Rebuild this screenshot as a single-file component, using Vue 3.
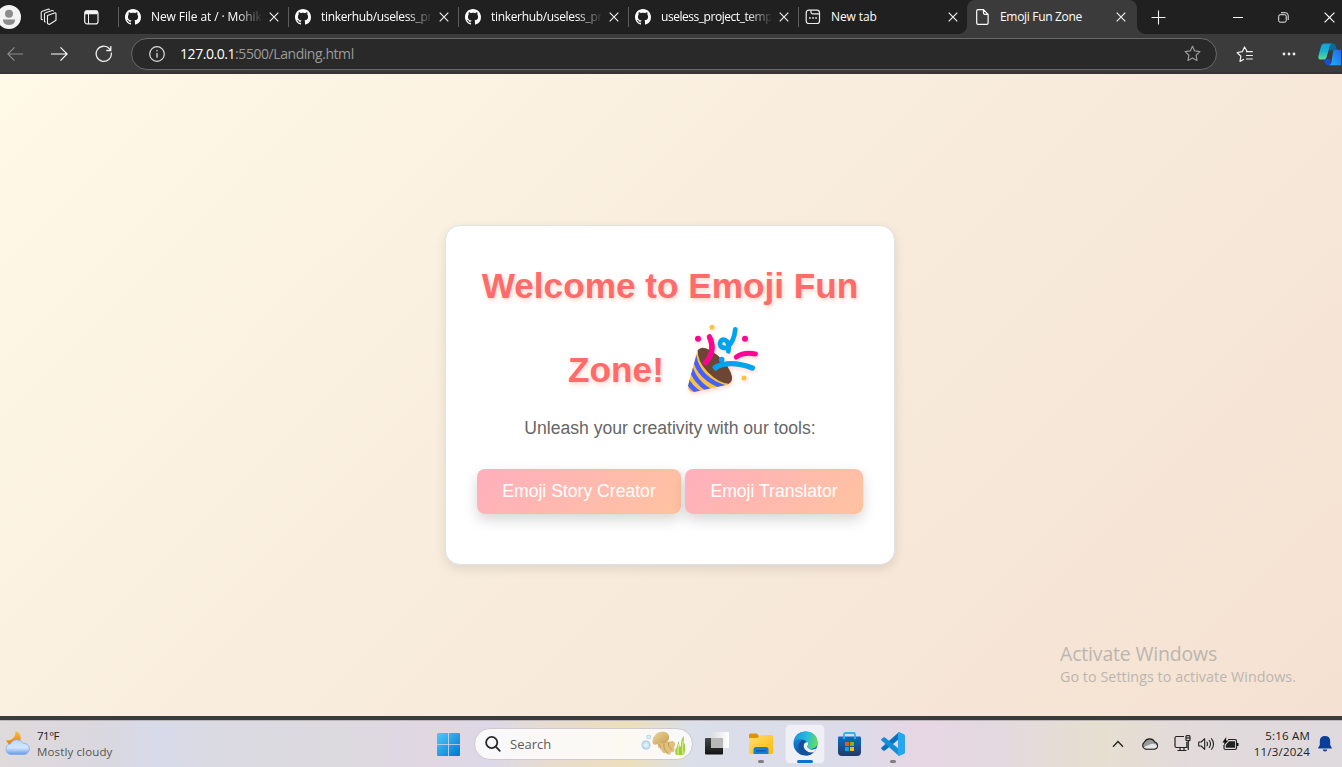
<script setup>
const githubTabs = [
  { title: 'New File at / · Mohik', fit: 'fit-a' },
  { title: 'tinkerhub/useless_pr', fit: 'fit-b' },
  { title: 'tinkerhub/useless_pr', fit: 'fit-b' },
  { title: 'useless_project_temp', fit: 'fit-c' }
]
</script>

<template>
  <div class="screen">
    <header class="tabs">
      <div class="lead">
        <svg class="avatar" width="22" height="24" viewBox="0 0 22 24">
          <circle cx="9" cy="12" r="12" fill="#f3f3f3" />
          <circle cx="9" cy="8.7" r="4" fill="#8c8c8c" />
          <path d="M3 14.5h12v1.2q-1 4.3-6 4.3t-6-4.300z" fill="#8c8c8c" />
        </svg>
        <svg class="spaces" width="18" height="18" viewBox="0 0 18 18" fill="none" stroke="#eee" stroke-width="1.1" stroke-linejoin="round">
          <path d="M7.500 7.500L14.500 5q1.500-.4 1.500 1v6.300L9.300 16.500 7.500 15.500z" />
          <path d="M5.500 14.200L4.500 13.500V6q0-1 1-1.300L12 2.500q1.300-.3 1.500 1" />
          <path d="M2.700 12L1.200 11V4.500q0-1 1-1.300L8 1.200q1.200-.3 1.500.7" />
        </svg>
        <svg class="vertical" width="15" height="15" viewBox="0 0 15 15" fill="none" stroke="#f4f4f4">
          <rect x=".7" y=".9" width="13.300" height="13" rx="2.500" stroke-width="1.200" />
          <path d="M1 3h12.600M1.500 1.700h12" stroke-width="2.400" />
          <path d="M4.500 3.500V14" />
        </svg>
      </div>
      <div v-for="(tab, i) in githubTabs" :key="i" class="tab">
        <svg width="16" height="16" viewBox="0 0 16 16" fill="#fff"><path d="M8 0C3.580 0 0 3.580 0 8c0 3.540 2.290 6.530 5.470 7.590.4.070.55-.17.55-.38 0-.19-.01-.82-.01-1.490-2.010.37-2.530-.49-2.690-.94-.09-.23-.48-.94-.82-1.130-.28-.15-.68-.52-.01-.53.63-.01 1.080.58 1.230.82.72 1.210 1.870.87 2.330.66.070-.52.28-.87.51-1.070-1.780-.2-3.640-.89-3.640-3.950 0-.87.31-1.590.82-2.150-.08-.2-.36-1.020.08-2.120 0 0 .67-.21 2.200.82.64-.18 1.320-.27 2-.27s1.360.09 2 .27c1.530-1.040 2.200-.82 2.200-.82.44 1.100.16 1.920.08 2.120.51.56.82 1.270.82 2.150 0 3.070-1.870 3.750-3.650 3.950.29.25.54.73.54 1.480 0 1.070-.01 1.930-.01 2.200 0 .21.15.46.55.38A8.010 8.010 0 0 0 16 8c0-4.420-3.580-8-8-8z" /></svg>
        <span class="title fade" :class="tab.fit">{{ tab.title }}</span>
        <svg class="x" width="10" height="10" viewBox="0 0 10 10"><path d="M.7.7l8.600 8.600M9.300.7L.7 9.300" /></svg>
      </div>
      <div class="tab newtab">
        <svg width="16" height="16" viewBox="0 0 16 16" fill="none" stroke="#eee" stroke-width="1.200">
          <rect x="1.200" y="1.200" width="13.300" height="13.300" rx="2.500" />
          <path d="M6 1.500v1.800q0 1.500 1.500 1.500h6.800" />
          <path d="M4 9h1.700M7.100 9h1.700M10.200 9h1.700" stroke-width="1.600" />
        </svg>
        <span class="title">New tab</span>
        <svg class="x" width="10" height="10" viewBox="0 0 10 10"><path d="M.7.7l8.600 8.600M9.300.7L.7 9.300" /></svg>
      </div>
      <div class="tab active">
        <svg width="13" height="16" viewBox="0 0 13 16" fill="none" stroke="#fff" stroke-width="1.200" stroke-linejoin="round">
          <path d="M2 .7h5.500l4.600 4.600v8.700q0 1.300-1.300 1.300H2Q.7 15.300.7 14V2Q.7.7 2 .7zM7.500.7v3.400q0 1.200 1.200 1.200h3.400" />
        </svg>
        <span class="title">Emoji Fun Zone</span>
        <svg class="x" width="10" height="10" viewBox="0 0 10 10"><path d="M.7.7l8.600 8.600M9.300.7L.7 9.300" /></svg>
      </div>
      <svg class="plus" width="15" height="15" viewBox="0 0 15 15"><path d="M7.500.5v14M.5 7.500h14" stroke="#eee" stroke-width="1.100" /></svg>
      <div class="window-buttons">
        <svg width="10" height="12" viewBox="0 0 10 12"><path d="M0 6.500h10" stroke="#fff" /></svg>
        <svg width="11" height="11" viewBox="0 0 11 11" fill="none" stroke="#eee"><rect x=".7" y="2.700" width="7.500" height="7.500" rx="1.500" /><path d="M3 .7h4.500q2.700 0 2.700 2.700V8" /></svg>
        <svg width="11" height="11" viewBox="0 0 11 11"><path d="M.6.6l9.800 9.800M10.400.6L.6 10.400" stroke="#fff" stroke-width="1.200" /></svg>
      </div>
    </header>

    <nav class="toolbar">
      <svg class="back" width="17" height="16" viewBox="0 0 17 16" fill="none" stroke="#8b8b8b" stroke-width="1.200"><path d="M16 8H1M7.500 1.300L.9 8l6.600 6.700" /></svg>
      <svg class="forward" width="17" height="16" viewBox="0 0 17 16" fill="none" stroke="#fff" stroke-width="1.200"><path d="M0 8h16M9.500 1.300L16.100 8l-6.600 6.700" /></svg>
      <svg class="reload" width="18" height="18" viewBox="0 0 18 18" fill="none" stroke="#eee" stroke-width="1.300"><path d="M16.300 7.700A7.600 7.600 0 1 1 14.500 3.800L15.700 5.200M15.800 1v4.500h-4.500" /></svg>
      <div class="address">
        <svg width="16" height="16" viewBox="0 0 16 16" fill="none" stroke="#ddd" stroke-width="1.200"><circle cx="8" cy="8" r="7.300" /><path d="M8 7v4.700" stroke-width="1.300" /><circle cx="8" cy="4.700" r=".8" fill="#ddd" stroke="none" /></svg>
        <span class="url"><b>127.0.0.1</b>:5500/Landing.html</span>
        <svg class="star" width="17" height="17" viewBox="0 0 17 17"><path d="M8.500 1.200l2.200 4.700 5.200.7-3.800 3.600.9 5.200-4.500-2.500L4 15.400l.9-5.200L1.100 6.600l5.200-.7z" fill="none" stroke="#999" stroke-width="1.200" stroke-linejoin="round" /></svg>
      </div>
      <svg class="favorites" width="18" height="17" viewBox="0 0 18 17" fill="none" stroke="#f2f2f2" stroke-width="1.200" stroke-linejoin="round"><path d="M11 5.200L8.500 1 6.300 5.700l-5.200.8 3.800 3.700-.9 5.200 4-2.200M10 5.700h6.800M10 9.500h6.800M10 13h6.800" /></svg>
      <svg class="dots" width="14" height="4" viewBox="0 0 14 4" fill="#eee"><circle cx="2" cy="2" r="1.400" /><circle cx="7" cy="2" r="1.400" /><circle cx="12" cy="2" r="1.400" /></svg>
      <svg class="copilot" width="23" height="23" viewBox="0 0 23 23">
        <defs>
          <linearGradient id="cpa" x1="0" y1="0" x2="0" y2="1"><stop offset="0" stop-color="#159fd5" /><stop offset=".5" stop-color="#18b4cf" /><stop offset="1" stop-color="#60dc8a" /></linearGradient>
          <linearGradient id="cpb" x1="1" y1="0" x2="0" y2="1"><stop offset="0" stop-color="#2464e8" /><stop offset="1" stop-color="#1bb5fb" /></linearGradient>
        </defs>
        <path d="M11 .5h3.500q3 0 3.600 3l.8 3.200h-3.600q-2.200 0-2.800 2.300z" fill="#08699c" />
        <path d="M6 16l1.200 4.200q.6 2 3 2h3l-1.500-6.200z" fill="#174be1" />
        <path d="M6.500.5h8q-2 0-2.600 2.300L8.700 14q-.7 2.500-3 2.500H3q-3.500 0-2.500-3.800L3 3.500Q3.700.5 6.500.5z" fill="url(#cpa)" />
        <path d="M15.400 6.700H23v15.500H10.500q2.200 0 2.800-2.300z" fill="url(#cpb)" />
      </svg>
    </nav>

    <main class="page">
      <section class="card">
        <h1>
          <span class="line">Welcome to Emoji Fun</span>
          <span class="line">Zone!
            <svg class="popper" width="90" height="85" viewBox="0 0 270 255" fill="none" stroke-linecap="round">
              <defs><clipPath id="cone"><path d="M53 106L24 213Q23 232 42 231L148 208Q152 199 145 200 74 187 53 106z" /></clipPath></defs>
              <path d="M53 106Q63 91 88 104 137 132 153 174 162 198 146 207 114 211 79 174 48 137 53 106z" fill="#6d4534" />
              <path d="M53 104L24 213Q23 232 42 231L149 207Q116 205 83 171 51 137 53 104z" fill="#fbc33d" />
              <g clip-path="url(#cone)" stroke="#4660ff" stroke-width="14" stroke-linecap="butt"><path d="M42 122Q55 193 137 218M31 155Q47 208 99 232M18 187Q29 218 62 236" /></g>
              <path d="M88 65Q110 111 72 148" stroke="#fb0693" stroke-width="16" stroke-linecap="butt" />
              <path d="M88 65Q104 96 88 128M169 126Q193 110 226 117" stroke="#fb0693" stroke-width="15" />
              <path d="M106 157Q151 134 217 159" stroke="#00a4ed" stroke-width="16" />
              <path d="M102 163l13-12" stroke="#00a4ed" stroke-width="15" stroke-linecap="butt" />
              <path d="M166 43Q162 82 140 98 119 101 120 84 126 67 140 78 149 89 145 109" stroke="#00a4ed" stroke-width="14" stroke-linejoin="round" />
              <circle cx="125" cy="134" r="8.500" fill="#00a4ed" />
              <g fill="#fb0693"><circle cx="54" cy="71" r="9" /><circle cx="195" cy="71" r="9" /></g>
              <g fill="#fbc33d"><circle cx="96" cy="37" r="7.500" /><circle cx="192" cy="189" r="7.500" /></g>
            </svg>
          </span>
        </h1>
        <p>Unleash your creativity with our tools:</p>
        <div class="actions">
          <button class="story">Emoji Story Creator</button>
          <button class="translator">Emoji Translator</button>
        </div>
      </section>
      <aside class="watermark">
        <div class="wm-title">Activate Windows</div>
        <div class="wm-sub">Go to Settings to activate Windows.</div>
      </aside>
    </main>

    <footer class="taskbar">
      <div class="weather">
        <svg width="26" height="25" viewBox="0 0 26 25">
          <defs>
            <linearGradient id="moon" x1="0" y1="0" x2="0" y2="1"><stop offset="0" stop-color="#fbc12d" /><stop offset="1" stop-color="#ed7515" /></linearGradient>
            <linearGradient id="cloud" x1="0" y1="0" x2="0" y2="1"><stop offset="0" stop-color="#bdd9fb" /><stop offset=".55" stop-color="#d3e5fc" /><stop offset="1" stop-color="#6598e8" /></linearGradient>
          </defs>
          <path d="M10.500 0Q18 3 15 11L9 15Q4 15 1 9.500 11 9.500 10.500 0z" fill="url(#moon)" />
          <path d="M6 23.500a5.400 5.400 0 0 1-.5-10.700A7 7 0 0 1 18 12.200a5.700 5.700 0 0 1 1.500 11.300z" fill="url(#cloud)" stroke="#79a8ed" stroke-width=".7" />
        </svg>
        <div><div class="temp">71°F</div><div class="cond">Mostly cloudy</div></div>
      </div>
      <svg class="start" width="23" height="23" viewBox="0 0 23 23">
        <defs><linearGradient id="win" x1="0" y1="0" x2="1" y2="1"><stop offset="0" stop-color="#4dccf9" /><stop offset="1" stop-color="#0074d0" /></linearGradient></defs>
        <path d="M1 0h10.200v11.200H0V1Q0 0 1 0zM12 0h10q1 0 1 1v10.200H12zM0 12h11.200v11H1q-1 0-1-1zM12 12h11v10q0 1-1 1H12z" fill="url(#win)" />
      </svg>
      <div class="search">
        <svg width="16" height="16" viewBox="0 0 16 16" fill="none" stroke="#292929" stroke-width="1.800" stroke-linecap="round"><circle cx="6.700" cy="6.500" r="5.600" /><path d="M10.800 10.700l4 4.100" /></svg>
        <span>Search</span>
        <svg class="reef" width="46" height="27" viewBox="0 0 46 27">
          <defs>
            <radialGradient id="bub"><stop offset="0" stop-color="#eafcff" /><stop offset=".65" stop-color="#c3e4ef" /><stop offset="1" stop-color="#a7bce4" /></radialGradient>
            <linearGradient id="jelly" x1="0" y1="0" x2="1" y2="1"><stop offset="0" stop-color="#ecd89b" /><stop offset="1" stop-color="#c59c52" /></linearGradient>
          </defs>
          <circle cx="5" cy="15" r="4.500" fill="url(#bub)" /><circle cx="7.700" cy="7" r="2.300" fill="url(#bub)" />
          <path d="M17 13q-1 7 3 4 0 7 5 6 4 4 5-1 5 1 3-5 3-3-1-6" fill="#e0c07c" />
          <path d="M18 14q3 5 1 5M23 14q-1 6 4 9M27 12q0 5 4 8" stroke="#ba9452" stroke-width=".9" fill="none" />
          <path d="M11.500 12Q12 2 22 1.500 29 2 28 9q-3 6-9 4-7 4-7.500-1z" fill="url(#jelly)" />
          <path d="M35 25q-2-5 1-8 1-5 2-6 0 8 2 5 0-8 3-10-1 6 1 9 1 5-1 10z" fill="#9ccb45" />
          <path d="M37 25q0-8 1-11M42 25q-1-8 0-14" stroke="#d6ea7c" stroke-width="1.300" fill="none" />
        </svg>
      </div>
      <div class="app taskview">
        <svg width="24" height="23" viewBox="0 0 24 23"><defs><linearGradient id="tvd" x1="0" y1="0" x2="0" y2="1"><stop offset="0" stop-color="#454748" /><stop offset="1" stop-color="#141414" /></linearGradient><linearGradient id="tvl"><stop offset="0" stop-color="#ddd" /><stop offset="1" stop-color="#fff" /></linearGradient></defs><rect x="6" width="18" height="16" rx="1" fill="url(#tvl)" /><rect y="6" width="18" height="16.500" rx="1" fill="url(#tvd)" /><path d="M6 6h12v10H6z" fill="#b9b9b9" /></svg>
      </div>
      <div class="app">
        <svg width="24" height="22" viewBox="0 0 24 22"><defs><linearGradient id="fold" x1="0" y1="0" x2="1" y2="1"><stop offset="0" stop-color="#ffdf70" /><stop offset="1" stop-color="#fdb909" /></linearGradient></defs><path d="M0 2Q0 .5 1.500.5h6.300L10 3v5H0z" fill="#d99600" /><path d="M0 5h8.500L11 2h11.500Q24 2 24 3.500v16q0 1.500-1.500 1.500h-21Q0 21 0 19.500z" fill="url(#fold)" /><path d="M4.500 21v-4.500q0-2.500 2.500-2.500h10q2.500 0 2.500 2.500V21z" fill="#1480d1" /><path d="M7 17.800h10" stroke="#0858a1" stroke-width="1.200" /></svg>
        <i></i>
      </div>
      <div class="app current">
        <svg width="25" height="25" viewBox="0 0 25 25">
          <defs>
            <linearGradient id="ea" x1="0" y1=".3" x2="1" y2=".5"><stop offset="0" stop-color="#1794dc" /><stop offset=".55" stop-color="#26bddd" /><stop offset="1" stop-color="#66dc5c" /></linearGradient>
            <linearGradient id="eb" x1="0" y1="0" x2="0" y2="1"><stop offset="0" stop-color="#2097df" /><stop offset="1" stop-color="#0954aa" /></linearGradient>
          </defs>
          <circle cx="12.500" cy="12.500" r="12" fill="url(#eb)" />
          <path d="M.7 11Q2 .5 12.500.5 24 1 24.500 11q0 7-7.500 7-4-.5-2.500-3Q15 9 8 8 3 8 .7 11z" fill="url(#ea)" />
          <path d="M9 9Q2 15 8.500 23q7 3.500 12-1.500-9 1-10-6-.3-4.500 3-4.500Q12 8.500 9 9z" fill="#124f9c" />
          <path d="M15 11.500q-2.500-.7-4 1.500-1 3 1 5.500 3.500 4 9 2.500l2.500-3.500q-5 2.500-8.700-.5-1.500-2 .2-3.500z" fill="#f2eff5" />
        </svg>
        <i></i>
      </div>
      <div class="app">
        <svg width="23" height="24" viewBox="0 0 23 24"><defs><linearGradient id="store" x1="0" y1="0" x2="0" y2="1"><stop offset="0" stop-color="#0b6fc3" /><stop offset="1" stop-color="#223a66" /></linearGradient></defs><path d="M0 5.500q0-1 1-1h21q1 0 1 1V20q0 4-4 4H4q-4 0-4-4z" fill="url(#store)" /><path d="M6 7V2.500Q6 1 7.500 1h8Q17 1 17 2.500V7" fill="none" stroke="#25b8ef" stroke-width="1.800" /><path d="M7 10h4v4H7z" fill="#f15325" /><path d="M12 10h4v4h-4z" fill="#80bb08" /><path d="M7 15h4v4H7z" fill="#06a6ef" /><path d="M12 15h4v4h-4z" fill="#ffba08" /></svg>
      </div>
      <div class="app">
        <svg width="24" height="24" viewBox="0 0 24 24"><path d="M18 0v7L4 18.500q-1 .6-1.800 0L.5 17q-.8-.8 0-1.600z" fill="#0873bd" /><path d="M18 24v-7L4 5.500q-1-.6-1.800 0L.5 7q-.8.8 0 1.600z" fill="#118ed7" /><path d="M18 0l5 2.300q1 .5 1 1.500v16.400q0 1-1 1.500L18 24q-1 0-1-1V1q0-1 1-1z" fill="#27a5ef" /></svg>
        <i></i>
      </div>
      <div class="tray">
        <svg class="chev" width="12" height="8" viewBox="0 0 12 8"><path d="M1 6.700L6 1.500l5 5.200" fill="none" stroke="#222" stroke-width="1.300" /></svg>
        <svg class="cloudy" width="18" height="12" viewBox="0 0 18 12"><path d="M4.500 11.200A4 4 0 0 1 3.500 4 5.700 5.700 0 0 1 13.700 4a3.700 3.700 0 0 1-.2 7.200z" fill="#999" stroke="#222" stroke-width="1.200" /><path d="M2.500 9.200L10 6q4-1 6 1.500 0 3-3 3H5z" fill="#e6e6e6" /></svg>
        <svg class="net" width="17" height="17" viewBox="0 0 17 17" fill="none" stroke="#222" stroke-width="1.200"><path d="M10 1.500H2.500q-1.500 0-1.500 1.500v8q0 1.500 1.500 1.500h10.300V7M6 12.500v3M10 12.500v3M3.500 15.500h9M14.300 6v9" /><rect x="12" y=".7" width="4" height="5" rx="1" /><path d="M12 3h4" /></svg>
        <svg class="sound" width="17" height="14" viewBox="0 0 17 14" fill="none" stroke="#222" stroke-width="1.100" stroke-linejoin="round"><path d="M.7 5v4h2.500l3.500 3.300V1.700L3.200 5zM8.700 4.700q1.600 2.300 0 4.600M11 3q3 4 0 8M13.300 1.300q4.500 5.700 0 11.400" /></svg>
        <svg class="battery" width="17" height="14" viewBox="0 0 17 14"><path d="M6 2.500h7q1.500 0 1.500 1.500v7q0 1.500-1.500 1.500H3.500Q2 12.500 2 11V8" fill="none" stroke="#222" stroke-width="1.200" /><path d="M7 4.200h6v6.600H3.800V8z" fill="#222" /><path d="M15 6h1.500v3H15zM4.300 0L.3 5.500h2.200L1.700 8.500 6.500 3.500H4z" fill="#111" /></svg>
        <div class="clock"><div class="time">5:16 AM</div><div class="date">11/3/2024</div></div>
        <svg class="bell" width="14" height="16" viewBox="0 0 14 16" fill="#0a3f99"><path d="M7 0q5 0 5.200 5v4l1.500 2.500q.4 1-.7 1H1q-1.100 0-.7-1L1.800 9V5Q2 0 7 0zM4.700 13.500h4.600Q9 15.500 7 15.500t-2.300-2z" /></svg>
      </div>
    </footer>
  </div>
</template>

<style>
html, body { margin: 0; overflow: hidden; }
</style>

<style scoped>
* { box-sizing: border-box; }
.screen { width: 1342px; height: 767px; display: flex; flex-direction: column; overflow: hidden; font-family: "Open Sans", "Noto Sans", sans-serif; }
svg { display: block; flex: none; }

.tabs { height: 34px; background: #202020; display: flex; align-items: center; color: #fff; flex: none; }
.lead { width: 118px; display: flex; align-items: center; }
.spaces { margin-left: 18px; }
.vertical { margin-left: 26px; }
.tab { width: 170px; height: 34px; display: flex; align-items: center; padding-left: 7px; position: relative; flex: none; }
.tab:not(.active)::before { content: ""; position: absolute; left: 0; top: 7px; width: 1px; height: 20px; background: #5c5c5c; }
.title { margin-left: 10px; width: 110px; font-size: 12px; line-height: 18px; white-space: nowrap; overflow: hidden; letter-spacing: -.1px; }
.fade { -webkit-mask-image: linear-gradient(90deg, #000 86px, transparent 112px); mask-image: linear-gradient(90deg, #000 86px, transparent 112px); }
.fit-b { letter-spacing: -.33px; }
.fit-c { letter-spacing: -.46px; }
.x { margin-left: 8px; stroke: #eee; stroke-width: 1.2; }
.newtab { width: 169px; }
.newtab .title { width: 109px; }
.active { background: #3b3b3b; border-radius: 8px 8px 0 0; padding-left: 9px; }
.active .title { margin-left: 11px; width: 108px; letter-spacing: -.32px; }
.active::before, .active::after { content: ""; position: absolute; bottom: 0; width: 8px; height: 8px; }
.active::before { left: -8px; background: radial-gradient(circle at 0 0, transparent 7.5px, #3b3b3b 8px); }
.active::after { right: -8px; background: radial-gradient(circle at 100% 0, transparent 7.5px, #3b3b3b 8px); }
.plus { margin-left: 14px; }
.window-buttons { display: flex; align-items: center; gap: 36px; margin-left: 67px; }
.window-buttons svg:nth-child(2) { margin-left: -1px; margin-right: -1px; }

.toolbar { height: 40px; background: #3b3b3b; border-bottom: 2px solid #383434; display: flex; align-items: center; flex: none; padding: 2px 0 0 7px; }
.forward { margin-left: 27px; }
.reload { margin-left: 27px; }
.address { width: 1086px; height: 32px; margin-left: 18px; margin-top: 0; margin-bottom: 1px; border: 1px solid #696969; border-radius: 16px; background: #292929; display: flex; align-items: center; padding: 0 15px 0 17px; flex: none; position: relative; }
.url { flex: 1; margin-left: 15px; font-size: 14px; line-height: 20px; color: #9b9b9b; letter-spacing: -.44px; }
.url b { font-weight: 400; color: #fff; }
.favorites { margin-left: 19px; }
.dots { margin-left: 28px; }
.copilot { margin-left: 22px; }

.page { height: 642px; flex: none; background: linear-gradient(135deg, #fff9e7 0%, #f8ecdc 50%, #f5e1d2 100%); display: flex; justify-content: center; position: relative; }
.card { width: 450px; height: 340px; margin-top: 151px; margin-right: 2px; background: #fff; border: 1px solid #dfe2e5; border-radius: 15px; padding-top: 18px; box-shadow: 0 4px 12px rgba(0, 0, 0, .1); font-family: "Liberation Sans", Arial, sans-serif; text-align: center; flex: none; }
h1 { margin: 0; font-size: 35.2px; font-weight: 700; color: #ff6b6b; text-shadow: 1px 2px 4px rgba(255, 140, 100, .4); }
.line { height: 84px; line-height: 84px; display: flex; justify-content: center; align-items: center; white-space: nowrap; }
.popper { margin: 0 2px 25px 16px; filter: drop-shadow(1px 2px 2px rgba(255, 140, 100, .35)); }
p { margin: 1px 0 0; height: 30px; line-height: 30px; font-size: 17.6px; color: #666; }
.actions { display: flex; justify-content: center; gap: 4px; margin-top: 26px; }
button { height: 45px; border: 0; padding: 0; border-radius: 8px; color: #fff; font: 17.6px "Liberation Sans", Arial, sans-serif; background: linear-gradient(135deg, #ffafbd, #ffc3a0); box-shadow: 0 6px 14px rgba(0, 0, 0, .16); }
.story { width: 204px; }
.translator { width: 178px; }
.watermark { position: absolute; left: 1060px; top: 566px; color: #bbb5b0; white-space: nowrap; }
.wm-title { font-size: 19.500px; line-height: 27px; letter-spacing: -.18px; }
.wm-sub { font-size: 14.300px; line-height: 20px; letter-spacing: .05px; }

.taskbar { height: 51px; flex: none; border-top: 4px solid #393b3c; display: flex; align-items: center; position: relative; background: linear-gradient(90deg, #dfdadb 0, #dad8df 100px, #d7dae9 155px, #dbdae2 220px, #dcd9df 340px, #e1d7e3 430px, #dcd8e7 490px, #e8dccf 550px, #eddfbb 630px, #dadfe9 690px, #dcdbe9 850px, #e7d6e4 920px, #e3d9df 1000px, #e6dfd0 1100px, #e2dadb 1190px, #dfdade 1342px); box-shadow: inset 0 1px #bdb6b9; }
.weather { width: 436px; display: flex; padding-left: 5px; font-size: 11.500px; line-height: 16px; color: #202020; align-items: center; }
.weather > div { margin-left: 6px; }
.temp { letter-spacing: -.5px; }
.cond { color: #555; letter-spacing: .14px; }
.start { margin-left: 1px; margin-top: 1px; }
.search { width: 219px; height: 32px; margin-left: 14px; border: 1px solid #d0c9cf; border-radius: 16px; background: rgba(255, 255, 255, .82); display: flex; align-items: center; padding-left: 10px; font-size: 13px; color: #5b5b5b; }
.search span { flex: 1; margin-left: 9px; }
.reef { margin-right: 5px; }
.app { width: 38px; height: 38px; margin-left: 6px; display: flex; align-items: center; justify-content: center; position: relative; flex: none; border-radius: 4px; }
.taskview { margin-left: 5px; }
.current { background: rgba(255, 255, 255, .55); box-shadow: 0 0 0 1px rgba(255, 255, 255, .15); }
.app i { position: absolute; bottom: 0; left: 16px; width: 6px; height: 3px; border-radius: 2px; background: #817d83; }
.app.current i { left: 11px; width: 16px; background: #0874d0; }
.tray { display: flex; align-items: center; margin-left: auto; padding-right: 10px; }
.cloudy { margin-left: 17px; }
.net { margin-left: 15px; }
.sound { margin-left: 7px; }
.battery { margin-left: 7px; }
.clock { width: 71px; text-align: right; font-size: 11.500px; line-height: 16px; color: #202020; white-space: nowrap; letter-spacing: .2px; }
.bell { margin-left: 8px; }
</style>
